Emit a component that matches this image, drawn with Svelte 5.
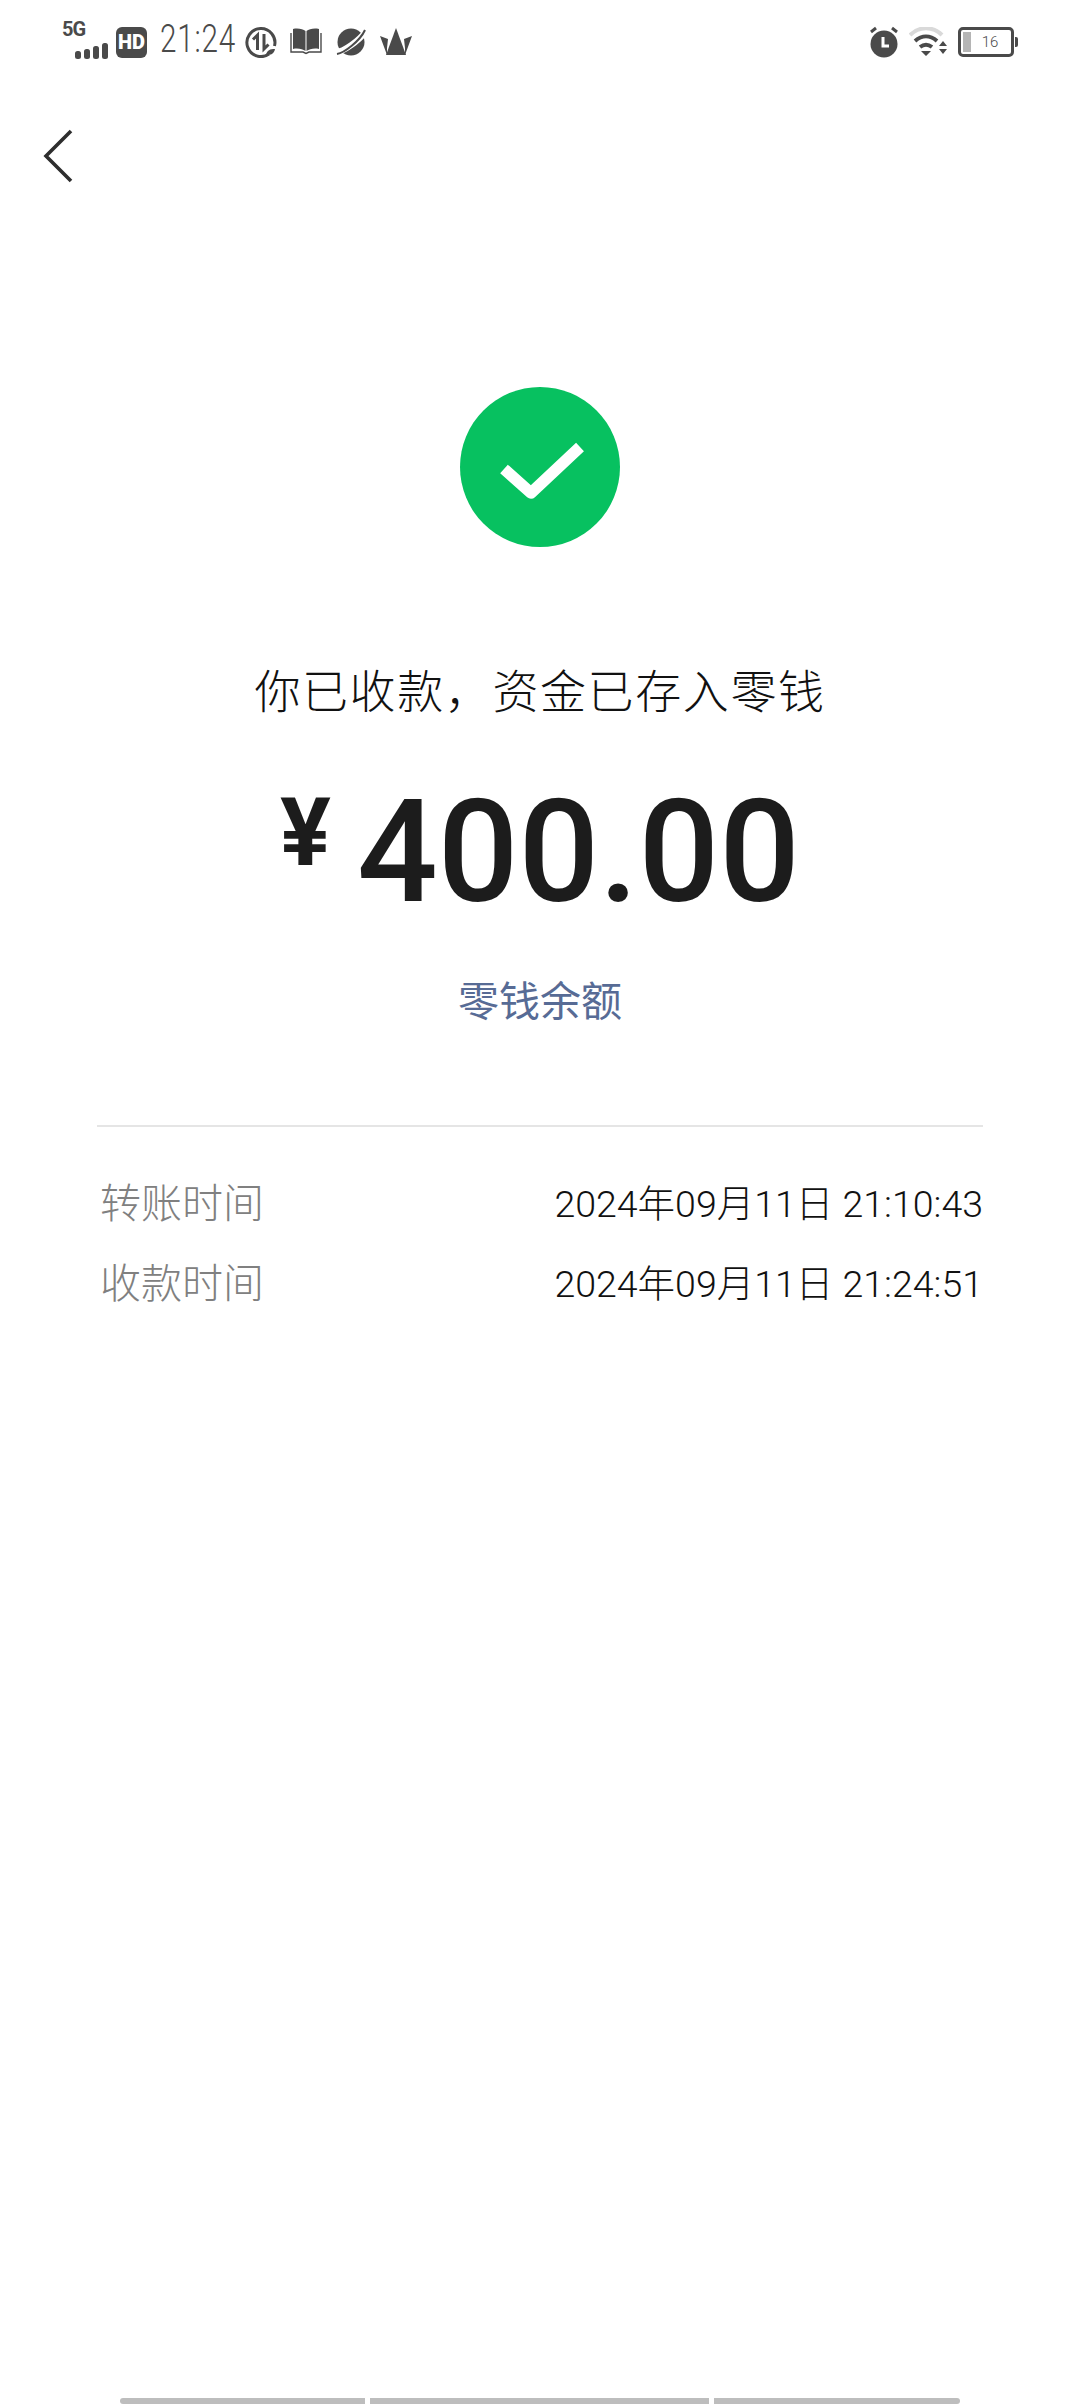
<script>
    const rows = [
        { label: "转账时间", value: "2024年09月11日 21:10:43" },
        { label: "收款时间", value: "2024年09月11日 21:24:51" },
    ];
</script>

<div class="page">
    <div class="status">
        <div class="side">
            <div class="signal">
                <span class="five-g">5G</span>
                <svg width="36" height="18" viewBox="0 0 36 18" fill="#4a4a4a">
                    <rect x="1" y="9" width="6" height="8" rx="2.5" />
                    <rect x="10" y="7" width="6" height="10" rx="2.5" />
                    <rect x="19" y="4" width="6" height="13" rx="2.5" />
                    <rect x="28" y="1" width="6" height="16" rx="2.5" />
                </svg>
            </div>
            <span class="hd">HD</span>
            <span class="clock">21:24</span>
            <svg class="ic" width="32" height="32" viewBox="0 0 32 32" fill="none" stroke="#4a4a4a">
                <path d="M24 28A14 14 0 1 1 29.500 20" stroke-width="3" />
                <path d="M12.500 24V9L8 13.500M19 8v15l4.500-4.500" stroke-width="3" />
                <path d="M21 29c1-5 4-6 9-6-1 5-4 6-9 6z" fill="#4a4a4a" stroke="none" />
            </svg>
            <svg class="ic" width="32" height="28" viewBox="0 0 32 28" fill="#4a4a4a">
                <path d="M3 1c5-1 10 0 12.500 2v20c-3-2-7.500-3-12.500-2zM29 1c-5-1-10 0-12.500 2v20c3-2 7.500-3 12.500-2z" />
                <path d="M1 5v19h12l3 1.500 3-1.500h12V5" fill="none" stroke="#4a4a4a" stroke-width="1.400" />
            </svg>
            <svg class="ic" width="32" height="30" viewBox="0 0 32 30">
                <circle cx="16" cy="15" r="13.500" fill="#4a4a4a" />
                <path d="M1 25C8 25 24 14 31 4" fill="none" stroke="#fff" stroke-width="6" />
                <path d="M2 27C9 26 25 14 30 3" fill="none" stroke="#4a4a4a" stroke-width="2" />
            </svg>
            <svg class="ic" width="32" height="28" viewBox="0 0 32 28" fill="#4a4a4a">
                <path d="M16 0l10 27H6z" />
                <path d="M0 8l8 3-1 9 0 7zM32 8l-8 3 1 9 0 7z" />
            </svg>
        </div>
        <div class="side right">
            <svg width="32" height="32" viewBox="0 0 32 32">
                <circle cx="16" cy="18" r="13.500" fill="#4a4a4a" />
                <path d="M3 6l5-4M29 6l-5-4" stroke="#4a4a4a" stroke-width="3" />
                <path d="M15 11v9h6" fill="none" stroke="#fff" stroke-width="3" />
            </svg>
            <svg width="40" height="30" viewBox="0 0 40 30" fill="none">
                <path d="M1 8c9-9 23-9 32 0" stroke="#d9d9d9" stroke-width="4" />
                <path d="M6 14c7-6 15-6 22 0M11 20c4-3 8-3 12 0" stroke="#4a4a4a" stroke-width="4" />
                <path d="M17 29l-5-5h10zM34 14l-4 5h8zM34 27l-4-5h8z" fill="#4a4a4a" />
            </svg>
            <div class="battery">
                <div class="cell"><span class="level"></span><span class="pct">16</span></div>
                <span class="cap"></span>
            </div>
        </div>
    </div>

    <div class="nav">
        <svg width="32" height="54" viewBox="0 0 32 54" fill="none">
            <path d="M29 2L4 27l25 25" stroke="#2e2e2e" stroke-width="3.600" />
        </svg>
    </div>

    <div class="result">
        <svg class="tick" width="160" height="160" viewBox="0 0 160 160">
            <circle cx="80" cy="80" r="80" fill="#07c160" />
            <path d="M44 82l27 24 49-46" fill="none" stroke="#fff" stroke-width="11.500" stroke-linejoin="round" />
        </svg>
        <p class="title">你已收款，资金已存入零钱</p>
        <p class="amount"><span class="yen">¥</span><span>400.00</span></p>
        <p class="balance">零钱余额</p>
    </div>

    <div class="details">
        {#each rows as row}
            <div class="row">
                <span class="label">{row.label}</span>
                <span class="value">{row.value}</span>
            </div>
        {/each}
    </div>

    <div class="gesture">
        <span class="seg a"></span>
        <span class="seg b"></span>
        <span class="seg c"></span>
    </div>
</div>

<style>
    :global(body) {
        margin: 0;
        background: #fff;
    }
    .page {
        height: 2408px;
        display: flex;
        flex-direction: column;
        box-sizing: border-box;
        font-family: "Noto Sans CJK SC", Roboto, sans-serif;
        overflow: hidden;
    }
    p {
        margin: 0;
    }
    .status {
        height: 84px;
        padding: 0 62px;
        display: flex;
        justify-content: space-between;
        align-items: center;
    }
    .side {
        display: flex;
        align-items: center;
    }
    .signal {
        width: 48px;
        height: 36px;
        position: relative;
    }
    .signal svg {
        position: absolute;
        right: 0;
        bottom: 0;
    }
    .five-g {
        position: absolute;
        left: 0;
        top: -7px;
        font: 700 20px Roboto, sans-serif;
        letter-spacing: -1px;
        color: #4a4a4a;
    }
    .hd {
        width: 31px;
        height: 31px;
        margin-left: 6px;
        border-radius: 6px;
        background: #4a4a4a;
        color: #fff;
        font: 900 20px/31px Roboto, sans-serif;
        text-align: center;
    }
    .clock {
        margin: -6px 0 0 13px;
        width: 72px;
        font: 300 38px Roboto, sans-serif;
        color: #4a4a4a;
        letter-spacing: 1px;
        transform: scaleX(0.78);
        transform-origin: left center;
    }
    .ic {
        margin-left: 13px;
    }
    .right {
        gap: 9px;
    }
    .battery {
        display: flex;
        align-items: center;
        gap: 1px;
    }
    .cell {
        border: 3px solid #4a4a4a;
        border-radius: 5px;
        display: flex;
        align-items: center;
        padding: 2px;
        box-sizing: content-box;
        width: 46px;
        height: 20px;
    }
    .level {
        width: 8px;
        height: 20px;
        background: #b5b5b5;
    }
    .pct {
        flex: 1;
        text-align: center;
        font: 300 15px Roboto, sans-serif;
        color: #4a4a4a;
    }
    .cap {
        width: 3px;
        height: 10px;
        background: #4a4a4a;
        border-radius: 0 2px 2px 0;
    }
    .nav {
        height: 76px;
        margin-top: 45px;
        padding-left: 42px;
    }
    .result {
        margin-top: 182px;
        display: flex;
        flex-direction: column;
        align-items: center;
        padding: 0 97px;
    }
    .tick {
        display: block;
    }
    .title {
        margin-top: 109px;
        font-size: 46px;
        line-height: 64px;
        font-weight: 300;
        letter-spacing: 1.6px;
        color: #111;
    }
    .amount {
        margin-top: 47px;
        display: flex;
        align-items: flex-start;
        font: 500 142px/172px Roboto, sans-serif;
        color: #1c1c1c;
    }
    .yen {
        font-size: 95px;
        line-height: 132px;
        font-weight: 700;
        margin-right: 26px;
    }
    .balance {
        margin-top: 31px;
        font-size: 41px;
        line-height: 56px;
        color: #576b95;
    }
    .details {
        margin: 99px 97px 0;
        padding-top: 33px;
        border-top: 2px solid #e5e5e5;
    }
    .row {
        height: 80px;
        display: flex;
        justify-content: space-between;
        align-items: center;
    }
    .label {
        margin-left: 3px;
        font-size: 41px;
        font-weight: 300;
        color: #808080;
    }
    .value {
        font: 300 37.5px Roboto, "Noto Sans CJK SC", sans-serif;
        color: #111;
    }
    .gesture {
        margin-top: auto;
        margin-bottom: 4px;
        padding: 0 120px;
        display: flex;
        gap: 5px;
    }
    .seg {
        height: 6px;
        background: #bdbdbd;
    }
    .a {
        width: 245px;
        border-radius: 3px 0 0 3px;
    }
    .b {
        width: 339px;
    }
    .c {
        flex: 1;
        border-radius: 0 3px 3px 0;
    }
</style>
